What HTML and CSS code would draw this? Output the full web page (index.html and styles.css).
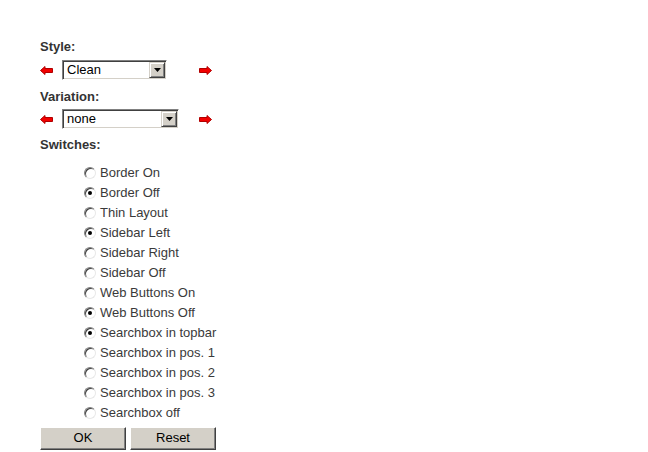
FILE: index.html
```html
<!DOCTYPE html>
<html>
<head>
<meta charset="utf-8">
<link rel="stylesheet" href="styles.css">
</head>
<body>
<form class="form">
  <div class="label">Style:</div>
  <div class="sel-row">
    <svg class="arrow" width="13" height="9" viewBox="0 0 13 9"><polygon points="0.5,4.5 5,0.5 5,2.5 12.5,2.5 12.5,6.5 5,6.5 5,8.5" fill="#f20000" stroke="#b00000" stroke-width="1"/></svg>
    <div class="select w-style"><span class="sel-text">Clean</span><span class="drop"><svg width="7" height="4" viewBox="0 0 7 4"><polygon points="0,0 7,0 3.5,4" fill="#000"/></svg></span></div>
    <svg class="arrow" width="13" height="9" viewBox="0 0 13 9"><polygon points="12.5,4.5 8,0.5 8,2.5 0.5,2.5 0.5,6.5 8,6.5 8,8.5" fill="#f20000" stroke="#b00000" stroke-width="1"/></svg>
  </div>
  <div class="label">Variation:</div>
  <div class="sel-row second">
    <svg class="arrow" width="13" height="9" viewBox="0 0 13 9"><polygon points="0.5,4.5 5,0.5 5,2.5 12.5,2.5 12.5,6.5 5,6.5 5,8.5" fill="#f20000" stroke="#b00000" stroke-width="1"/></svg>
    <div class="select w-var"><span class="sel-text">none</span><span class="drop"><svg width="7" height="4" viewBox="0 0 7 4"><polygon points="0,0 7,0 3.5,4" fill="#000"/></svg></span></div>
    <svg class="arrow" width="13" height="9" viewBox="0 0 13 9"><polygon points="12.5,4.5 8,0.5 8,2.5 0.5,2.5 0.5,6.5 8,6.5 8,8.5" fill="#f20000" stroke="#b00000" stroke-width="1"/></svg>
  </div>
  <div class="label">Switches:</div>
  <div class="opts">
    <div class="opt"><span class="radio"></span>Border On</div>
    <div class="opt"><span class="radio on"></span>Border Off</div>
    <div class="opt"><span class="radio"></span>Thin Layout</div>
    <div class="opt"><span class="radio on"></span>Sidebar Left</div>
    <div class="opt"><span class="radio"></span>Sidebar Right</div>
    <div class="opt"><span class="radio"></span>Sidebar Off</div>
    <div class="opt"><span class="radio"></span>Web Buttons On</div>
    <div class="opt"><span class="radio on"></span>Web Buttons Off</div>
    <div class="opt"><span class="radio on"></span>Searchbox in topbar</div>
    <div class="opt"><span class="radio"></span>Searchbox in pos. 1</div>
    <div class="opt"><span class="radio"></span>Searchbox in pos. 2</div>
    <div class="opt"><span class="radio"></span>Searchbox in pos. 3</div>
    <div class="opt"><span class="radio"></span>Searchbox off</div>
  </div>
  <div class="buttons">
    <span class="btn">OK</span>
    <span class="btn">Reset</span>
  </div>
</form>
</body>
</html>
```

FILE: styles.css
```css
html, body {
  margin: 0;
  padding: 0;
  background: #fff;
}
.form {
  margin: 0;
  padding: 39px 0 0 40px;
  width: 180px;
  font-family: "Liberation Sans", Arial, sans-serif;
  font-size: 13px;
  color: #333;
}
.label {
  font-weight: bold;
  height: 16px;
  line-height: 16px;
  margin-bottom: 5px;
}
.sel-row {
  display: grid;
  grid-template-columns: 22px 137px 13px;
  align-items: center;
  height: 20px;
  margin-bottom: 9px;
}
.sel-row.second {
  margin-top: -1px;
  margin-bottom: 8px;
}
.arrow {
  display: block;
}
.select {
  box-sizing: border-box;
  height: 20px;
  display: flex;
  align-items: center;
  justify-content: space-between;
  background: #fff;
  border-style: solid;
  border-width: 1px;
  border-color: #808080 #fff #fff #808080;
  box-shadow: inset 1px 1px 0 #404040, inset -1px -1px 0 #d4d0c8;
  padding: 1px 1px 1px 4px;
  color: #000;
}
.w-style { width: 105px; }
.w-var { width: 117px; }
.sel-text {
  line-height: 16px;
}
.drop {
  box-sizing: border-box;
  width: 16px;
  height: 16px;
  background: #d4d0c8;
  border-style: solid;
  border-width: 1px;
  border-color: #d4d0c8 #404040 #404040 #d4d0c8;
  box-shadow: inset 1px 1px 0 #fff, inset -1px -1px 0 #808080;
  display: flex;
  align-items: center;
  justify-content: center;
}
.drop svg { display: block; }
.opts {
  margin-top: 10px;
  padding-left: 44px;
}
.opt {
  display: flex;
  align-items: center;
  height: 20px;
  line-height: 20px;
  white-space: nowrap;
  color: #3a3a3a;
}
.radio {
  box-sizing: border-box;
  width: 12px;
  height: 12px;
  border-radius: 50%;
  margin-right: 4px;
  background: #fff;
  border: 1px solid;
  border-color: #808080 #e8e8e8 #e8e8e8 #808080;
  box-shadow: inset 1px 1px 0 #404040;
  position: relative;
}
.radio.on::after {
  content: "";
  position: absolute;
  left: 3px;
  top: 3px;
  width: 4px;
  height: 4px;
  border-radius: 50%;
  background: #000;
}
.buttons {
  display: flex;
  gap: 4px;
  margin-top: 4px;
}
.btn {
  box-sizing: border-box;
  width: 86px;
  height: 23px;
  background: #d4d0c8;
  border-style: solid;
  border-width: 1px;
  border-color: #fff #404040 #404040 #fff;
  box-shadow: inset -1px -1px 0 #808080;
  color: #000;
  text-align: center;
  line-height: 20px;
}
```
